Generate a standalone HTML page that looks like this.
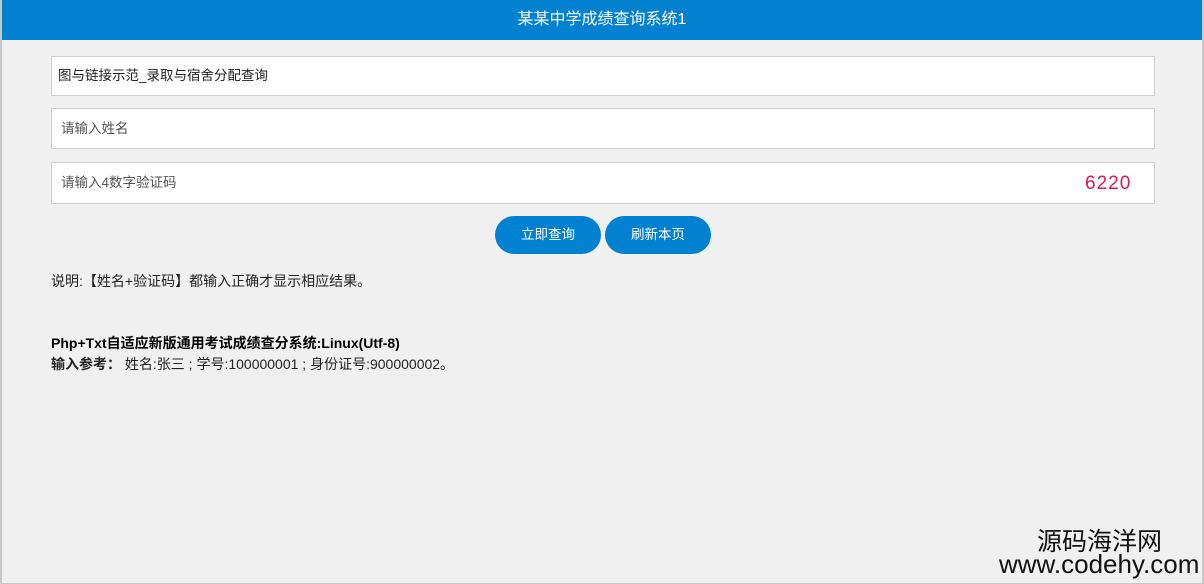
<!DOCTYPE html>
<html><head><meta charset="utf-8"><style>
body{margin:0;width:1204px;height:584px;background:#f0f0f0;font-family:"Liberation Sans","Noto Sans CJK SC",sans-serif;position:relative;overflow:hidden}
.lb{position:absolute;left:0;top:0;width:2px;height:584px;background:#c8c8c8}
.rb{position:absolute;right:0;top:0;width:2px;height:584px;background:#c8c8c8}
.bb{position:absolute;left:0;bottom:0;width:1204px;height:1px;background:#c8c8c8}
.hd{position:absolute;left:2px;top:0;width:1200px;height:40px;background:#0281d0;color:#fff;text-align:center;line-height:40px;font-size:16px}
.in{position:absolute;left:51px;width:1104px;background:#fff;border:1px solid #cfcfcf;font-size:13.5px;color:#333;box-sizing:border-box;padding-left:9px}
.bt{position:absolute;top:216px;width:106px;height:38px;border-radius:19px;background:#0281d0;color:#fff;font-size:13.5px;text-align:center;line-height:38px}
.t{position:absolute;left:51px;font-size:14px;color:#222}
</style></head><body>
<div class="lb"></div><div class="rb"></div><div class="bb"></div>
<div class="hd">某某中学成绩查询系统1</div>
<div class="in" style="top:56px;height:40px;line-height:38px;padding-left:6px;color:#222">图与链接示范_录取与宿舍分配查询</div>
<div class="in" style="top:108px;height:41px;line-height:39px;color:#555">请输入姓名</div>
<div class="in" style="top:162px;height:42px;line-height:40px;color:#555">请输入4数字验证码<span style="position:absolute;left:1033px;top:1px;color:#e0164e;font-size:19px;letter-spacing:1px">6220</span></div>
<div class="bt" style="left:495px">立即查询</div>
<div class="bt" style="left:605px">刷新本页</div>
<div class="t" style="top:271px">说明:【姓名+验证码】都输入正确才显示相应结果。</div>
<div class="t" style="top:333px;font-weight:bold;color:#000">Php+Txt自适应新版通用考试成绩查分系统:Linux(Utf-8)</div>
<div class="t" style="top:354px"><b>输入参考：</b> 姓名:张三 ; 学号:100000001 ; 身份证号:900000002。</div>
<div style="position:absolute;left:1037px;top:527px;font-size:25px;line-height:30px;color:#111">源码海洋网</div>
<div style="position:absolute;left:999px;top:550px;font-size:26px;line-height:28px;color:#111">www.codehy.com</div>
</body></html>
